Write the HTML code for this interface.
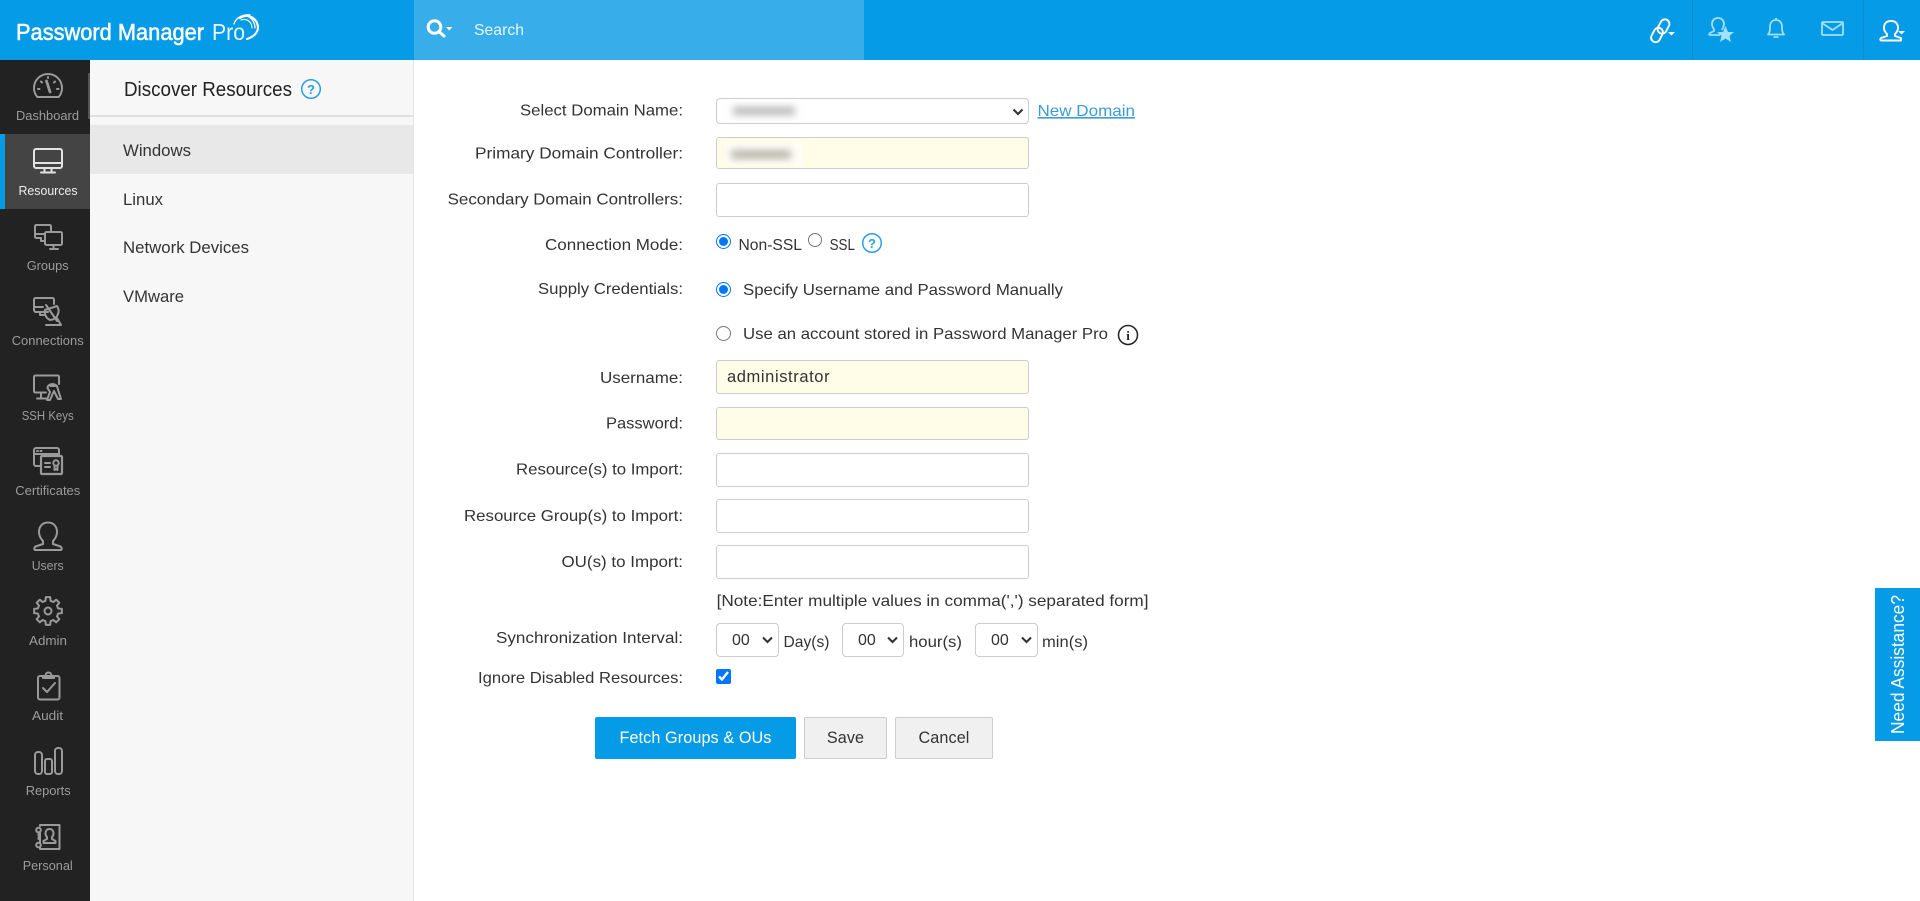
<!DOCTYPE html>
<html lang="en">
<head>
<meta charset="utf-8">
<title>Password Manager Pro - Discover Resources</title>
<style>
html,body{margin:0;padding:0;background:#fff;width:1920px;height:901px;overflow:hidden;font-family:"Liberation Sans",sans-serif;color:#333}
.a{position:absolute;box-sizing:border-box}
input[type=text]{margin:0;background:#fff;border:1px solid #ccc;border-radius:3px;font:16.5px "Liberation Sans",sans-serif;letter-spacing:.6px;color:#333;padding:1px 0 0 10px;outline:none}
input.y{background:#fffce8}
select{margin:0;background:#fff;border:1px solid #ccc;border-radius:4px;font:16px "Liberation Sans",sans-serif;color:#333;outline:none;appearance:none;-webkit-appearance:none}
input[type=radio],input[type=checkbox]{margin:0;accent-color:#0075ff}
button{margin:0;padding:0;border:1px solid #ccc;border-radius:2px;background:#f0f0f0;font:16.2px "Liberation Sans",sans-serif;color:#333;letter-spacing:.1px}
svg{position:absolute;left:0;top:0;pointer-events:none}
</style>
</head>
<body>
<div class="a" style="left:0;top:0;width:1920px;height:60px;background:#059be6"></div>
<div class="a" style="left:414px;top:0;width:450px;height:60px;background:#37aeea"></div>
<div class="a" style="left:1692px;top:0;width:1px;height:60px;background:#0c8dd0"></div>
<div class="a" style="left:1863px;top:0;width:1px;height:60px;background:#0c8dd0"></div>

<div class="a" style="left:0;top:60px;width:90px;height:841px;background:#222"></div>
<div class="a" style="left:0;top:134px;width:90px;height:75px;background:#444"></div>
<div class="a" style="left:0;top:134px;width:5px;height:75px;background:#059be6"></div>
<div class="a" style="left:90px;top:60px;width:324px;height:841px;background:#f7f7f7;border-right:1px solid #e6e6e6"></div>
<div class="a" style="left:88px;top:73px;width:2px;height:46px;background:#555"></div>
<div class="a" style="left:90px;top:115px;width:323px;height:2px;background:#e0e0e0"></div>
<div class="a" style="left:90px;top:125px;width:323px;height:49px;background:#e8e8e8"></div>

<select class="a" style="left:716px;top:98px;width:313px;height:26px"><option>&nbsp;</option></select>
<input class="a y" type="text" style="left:716px;top:137px;width:313px;height:32px">
<input class="a" type="text" style="left:716px;top:183px;width:313px;height:34px">
<input class="a" type="radio" name="m" checked style="left:716px;top:234px;width:15px;height:15px">
<input class="a" type="radio" name="m" style="left:808px;top:233px;width:14px;height:14px">
<input class="a" type="radio" name="c" checked style="left:716px;top:282px;width:15px;height:15px">
<input class="a" type="radio" name="c" style="left:716px;top:326px;width:15px;height:15px">
<input class="a y" type="text" value="administrator" style="left:716px;top:360px;width:313px;height:34px">
<input class="a y" type="text" style="left:716px;top:407px;width:313px;height:33px">
<input class="a" type="text" style="left:716px;top:453px;width:313px;height:34px">
<input class="a" type="text" style="left:716px;top:499px;width:313px;height:34px">
<input class="a" type="text" style="left:716px;top:545px;width:313px;height:34px">
<select class="a" style="left:716px;top:623px;width:63px;height:34px;padding-left:15px"><option>00</option></select>
<select class="a" style="left:842px;top:623px;width:62px;height:34px;padding-left:15px"><option>00</option></select>
<select class="a" style="left:975px;top:623px;width:63px;height:34px;padding-left:15px"><option>00</option></select>
<input class="a" type="checkbox" checked style="left:716px;top:669px;width:15px;height:15px">
<button class="a" style="left:595px;top:717px;width:201px;height:42px;background:#059be6;border-color:#059be6;color:#fff">Fetch Groups &amp; OUs</button>
<button class="a" style="left:804px;top:717px;width:83px;height:42px">Save</button>
<button class="a" style="left:895px;top:717px;width:98px;height:42px">Cancel</button>
<div class="a" style="left:1875px;top:588px;width:45px;height:153px;background:#059be6"></div>

<svg width="1920" height="901" viewBox="0 0 1920 901" xmlns="http://www.w3.org/2000/svg" font-family="'Liberation Sans',sans-serif">
<defs><filter id="b" x="-30%" y="-100%" width="160%" height="300%"><feGaussianBlur stdDeviation="4"/></filter></defs>

<!-- select chevrons -->
<g fill="none" stroke="#333" stroke-width="2.100">
<path d="M1013.500 109.500L1018 114L1022.500 109.500"/>
<path d="M763 637.500L767.500 642L772 637.500"/>
<path d="M888 637.500L892.500 642L897 637.500"/>
<path d="M1022 637.500L1026.500 642L1031 637.500"/>
</g>

<!-- blurred values -->
<rect x="725" y="103" width="83" height="17" fill="#fff"/>
<rect x="733" y="107" width="62" height="8" fill="#b5b5b5" filter="url(#b)"/>
<rect x="725" y="143" width="78" height="23" fill="#fffef6"/>
<rect x="731" y="150" width="60" height="9" fill="#b8b6aa" filter="url(#b)"/>

<!-- logo -->
<g fill="#fff">
<text x="16" y="40" font-size="23.500" stroke="#fff" stroke-width=".55" textLength="188" lengthAdjust="spacingAndGlyphs">Password Manager</text>
<text x="212" y="40" font-size="23.500" fill="#eaf7fe" textLength="33" lengthAdjust="spacingAndGlyphs">Pro</text>
</g>
<g fill="none" stroke="#fff" stroke-linecap="round">
<path d="M234 24C236 17 244 14 250 15" stroke-width="1.300"/>
<path d="M240 18C248 13 257 18 258 27C258 33 253 37 247 39" stroke-width="2.200"/>
<path d="M244 15C250 16 255 21 255 28" stroke-width="1.300"/>
<path d="M241 20C247 18 252 22 252 28" stroke-width="1.100"/>
</g>

<!-- search -->
<g fill="none" stroke="#fff">
<circle cx="434.500" cy="27" r="6.300" stroke-width="3"/>
<path d="M439.500 32L444 36" stroke-width="3" stroke-linecap="round"/>
</g>
<path d="M446 27H452.500L449.200 30.500Z" fill="#fff"/>
<text x="474" y="35" font-size="16" fill="#e8f6fd" textLength="50" lengthAdjust="spacingAndGlyphs">Search</text>

<!-- top right icons -->
<g fill="none" stroke="#fff" stroke-width="1.900" stroke-linejoin="round">
<rect x="1659" y="19" width="9" height="15" rx="4.500" transform="rotate(28 1663.500 26.500)"/>
<rect x="1652.500" y="27.500" width="9" height="15" rx="4.500" transform="rotate(28 1657 35)"/>
<path d="M1891 21C1886 21 1884 24 1884 28C1884 31 1886 33 1887 34V36L1881 38C1880 39 1880 40 1881 40.500H1901V38L1895 36V34C1896 33 1898 31 1898 28C1898 24 1896 21 1891 21Z"/>
</g>
<path d="M1668 32H1675L1671.500 35.500Z" fill="#fff"/>
<path d="M1898 31H1905L1901.500 34.500Z" fill="#fff"/>
<g fill="none" stroke="#a3e0fc" stroke-width="1.800" stroke-linejoin="round">
<path d="M1718 18C1714 18 1712 21 1712 24C1712 27 1713 28 1714 29V31L1710 33C1709 34 1709 35 1710 35H1720M1722 30C1723 28 1724 26 1724 24C1724 21 1722 18 1718 18"/>
<path d="M1768 34.500C1770 32 1770 30 1770 27C1770 23 1772 20 1776 20C1780 20 1782 23 1782 27C1782 30 1782 32 1784 34.500ZM1776 18V20M1773.500 37H1778.500"/>
<rect x="1822" y="22" width="21" height="13" rx="1"/>
<path d="M1822 23L1832.500 30L1843 23"/>
</g>
<path d="M1725.500 26L1728 32H1734L1729.500 36L1731 42L1725.500 38.500L1720 42L1721.500 36L1717 32H1723Z" fill="#a3e0fc"/>

<!-- sidebar icons -->
<g fill="none" stroke="#9a9a9a" stroke-width="2" stroke-linecap="round" stroke-linejoin="round">
<path d="M37.300 97A14 14 0 1 1 58.700 97Z"/>
<path d="M46.500 81L50 92" stroke-width="2.800"/>
<path d="M38 89H39.500M57 89H58.500M41 81.500L42 82.500M55 81.500L54 82.500M48 77V78"/>

<g stroke="#e2e2e2">
<rect x="34" y="149" width="28" height="19" rx="2"/>
<path d="M34 163H62M44.500 168V171.500M51.500 168V171.500M41 172.500H55"/>
</g>

<path d="M41 238H36.500C35.500 238 35 237.500 35 236.500V226.500C35 225.500 35.500 225 36.500 225H49.500C50.500 225 51 225.500 51 226.500V231"/>
<rect x="45" y="232" width="17" height="13" rx="1.500"/>
<path d="M36 234H44M41 238V241H45M50 249H58M53.500 245V249"/>

<path d="M48 312H36C35 312 34 311 34 310V299.500C34 298.500 35 298 36 298H52C53 298 54 298.500 54 299.500V304"/>
<path d="M35 307H43M40 312V315H44M46 305L57 321M57 306A9 9 0 0 1 50 320A9 9 0 0 1 45 310ZM46 325H61L57 318"/>

<path d="M59 384V377C59 376 58.500 375.500 57.500 375.500H35.500C34.500 375.500 34 376 34 377V391C34 392 34.500 392.500 35.500 392.500H46M41 393V398M37 398.500H46"/>
<path d="M47.500 388A5 4 0 1 1 57.500 388L61 399H58L54 391L50 400H47L50 392ZM50.500 386H55"/>

<path d="M40 466H36C35 466 34 465 34 464V450C34 449 35 448 36 448H57C58 448 59 449 59 450V455M34 454H59M37 451H38M40.500 451H41.500"/>
<rect x="41" y="456" width="21" height="18" rx="1" stroke-width="2.200"/>
<path d="M45 463H50M45 467H50"/>
<circle cx="56" cy="463" r="2.700"/>
<path d="M54.500 466V470L56 469L57.500 470V466"/>

<path d="M48 522.500C42 522.500 39 527 39 532C39 536 41 539 43 541V544L35.500 546.500C34 547.500 34 550 35 550H61C62 550 62 547.500 60.500 546.500L53 544V541C55 539 57 536 57 532C57 527 54 522.500 48 522.500Z"/>

<g transform="translate(48 611)">
<path d="M10.190 -2.540L13.830 -2.190L13.830 2.190L10.190 2.540L9 5.410L11.330 8.230L8.230 11.330L5.410 9L2.540 10.190L2.190 13.830L-2.190 13.830L-2.540 10.190L-5.410 9L-8.230 11.330L-11.330 8.230L-9 5.410L-10.190 2.540L-13.830 2.190L-13.830 -2.190L-10.190 -2.540L-9 -5.410L-11.330 -8.230L-8.230 -11.330L-5.410 -9L-2.540 -10.190L-2.190 -13.830L2.190 -13.830L2.540 -10.190L5.410 -9L8.230 -11.330L11.330 -8.230L9 -5.410Z"/>
<circle r="3.500"/>
</g>

<rect x="38" y="676" width="21.500" height="23.500" rx="2"/>
<path d="M43 676V678H54V676H51.500C51.500 673.500 50 672.500 48.500 672.500C47 672.500 45.500 673.500 45.500 676Z"/>
<path d="M43 688L47 692L55 683"/>

<rect x="35" y="752" width="7" height="22" rx="3"/>
<rect x="45" y="759" width="7" height="15" rx="2"/>
<rect x="55" y="748" width="7" height="26" rx="3"/>

<path d="M40 826V825H59.500V849H40V847M40 833V842"/>
<circle cx="38.500" cy="830" r="2.300"/>
<circle cx="38.500" cy="845" r="2.300"/>
<path d="M38.500 834V841" stroke-dasharray="1.500 2"/>
<path d="M49.500 829C47 829 45.500 831 45.500 833.500C45.500 835 46.500 836.500 47 837V839L43.500 841V843H55.500V841L52 839V837C52.500 836.500 53.500 835 53.500 833.500C53.500 831 52 829 49.500 829Z"/>
</g>

<!-- sidebar labels -->
<g font-size="13" fill="#9c9c9c">
<text x="16" y="120" textLength="63" lengthAdjust="spacingAndGlyphs">Dashboard</text>
<text x="18.500" y="195" textLength="59" lengthAdjust="spacingAndGlyphs" fill="#eee">Resources</text>
<text x="26.700" y="270" textLength="42" lengthAdjust="spacingAndGlyphs">Groups</text>
<text x="11.700" y="345" textLength="72" lengthAdjust="spacingAndGlyphs">Connections</text>
<text x="21.700" y="420" textLength="52" lengthAdjust="spacingAndGlyphs">SSH Keys</text>
<text x="15.300" y="495" textLength="65" lengthAdjust="spacingAndGlyphs">Certificates</text>
<text x="31.700" y="570" textLength="32" lengthAdjust="spacingAndGlyphs">Users</text>
<text x="29" y="645" textLength="38" lengthAdjust="spacingAndGlyphs">Admin</text>
<text x="32" y="720" textLength="31" lengthAdjust="spacingAndGlyphs">Audit</text>
<text x="25.700" y="795" textLength="45" lengthAdjust="spacingAndGlyphs">Reports</text>
<text x="22.700" y="870" textLength="50" lengthAdjust="spacingAndGlyphs">Personal</text>
</g>

<!-- secondary panel -->
<text x="124" y="96" font-size="20" fill="#222" textLength="168" lengthAdjust="spacingAndGlyphs">Discover Resources</text>
<circle cx="311" cy="89" r="9.300" fill="none" stroke="#2b9de4" stroke-width="1.500"/>
<text x="311" y="94" font-size="13" font-weight="bold" fill="#2b9de4" text-anchor="middle">?</text>
<g font-size="17" fill="#333">
<text x="123" y="156" textLength="68" lengthAdjust="spacingAndGlyphs">Windows</text>
<text x="123" y="205" textLength="40" lengthAdjust="spacingAndGlyphs">Linux</text>
<text x="123" y="253" textLength="126" lengthAdjust="spacingAndGlyphs">Network Devices</text>
<text x="123" y="302" textLength="61" lengthAdjust="spacingAndGlyphs">VMware</text>
</g>

<!-- form labels -->
<g font-size="16" fill="#333">
<text x="520" y="115.500" textLength="163" lengthAdjust="spacingAndGlyphs">Select Domain Name:</text>
<text x="475" y="158.500" textLength="208" lengthAdjust="spacingAndGlyphs">Primary Domain Controller:</text>
<text x="447.600" y="204.500" textLength="235.400" lengthAdjust="spacingAndGlyphs">Secondary Domain Controllers:</text>
<text x="545" y="250" textLength="138" lengthAdjust="spacingAndGlyphs">Connection Mode:</text>
<text x="538" y="294" textLength="145" lengthAdjust="spacingAndGlyphs">Supply Credentials:</text>
<text x="600" y="383" textLength="83" lengthAdjust="spacingAndGlyphs">Username:</text>
<text x="606" y="428.500" textLength="77" lengthAdjust="spacingAndGlyphs">Password:</text>
<text x="516" y="474.500" textLength="167" lengthAdjust="spacingAndGlyphs">Resource(s) to Import:</text>
<text x="464" y="521" textLength="219" lengthAdjust="spacingAndGlyphs">Resource Group(s) to Import:</text>
<text x="561.500" y="567" textLength="121.500" lengthAdjust="spacingAndGlyphs">OU(s) to Import:</text>
<text x="496" y="643" textLength="187" lengthAdjust="spacingAndGlyphs">Synchronization Interval:</text>
<text x="478" y="683" textLength="205" lengthAdjust="spacingAndGlyphs">Ignore Disabled Resources:</text>

<text x="738.500" y="250" textLength="63.500" lengthAdjust="spacingAndGlyphs">Non-SSL</text>
<text x="829.600" y="250" textLength="25.400" lengthAdjust="spacingAndGlyphs">SSL</text>
<text x="743" y="295" textLength="320" lengthAdjust="spacingAndGlyphs">Specify Username and Password Manually</text>
<text x="743" y="339" textLength="365" lengthAdjust="spacingAndGlyphs">Use an account stored in Password Manager Pro</text>
<text x="716.600" y="606" textLength="431.900" lengthAdjust="spacingAndGlyphs">[Note:Enter multiple values in comma(',') separated form]</text>
<text x="783.500" y="647" textLength="46" lengthAdjust="spacingAndGlyphs">Day(s)</text>
<text x="909" y="647" textLength="53" lengthAdjust="spacingAndGlyphs">hour(s)</text>
<text x="1042" y="647" textLength="46" lengthAdjust="spacingAndGlyphs">min(s)</text>
</g>
<text x="1037.500" y="116" font-size="16" fill="#3a9bd9" text-decoration="underline" textLength="97.500" lengthAdjust="spacingAndGlyphs">New Domain</text>

<circle cx="872" cy="243" r="9.300" fill="none" stroke="#2b9de4" stroke-width="1.500"/>
<text x="872" y="248" font-size="13" font-weight="bold" fill="#2b9de4" text-anchor="middle">?</text>
<circle cx="1128" cy="335" r="9.500" fill="none" stroke="#222" stroke-width="1.500"/>
<text x="1128" y="340" font-size="13" font-weight="bold" fill="#222" text-anchor="middle" font-family="'Liberation Serif',serif">i</text>

<text transform="translate(1904 734) rotate(-90)" font-size="18" fill="#fff" textLength="139" lengthAdjust="spacingAndGlyphs">Need Assistance?</text>
</svg>
</body>
</html>
